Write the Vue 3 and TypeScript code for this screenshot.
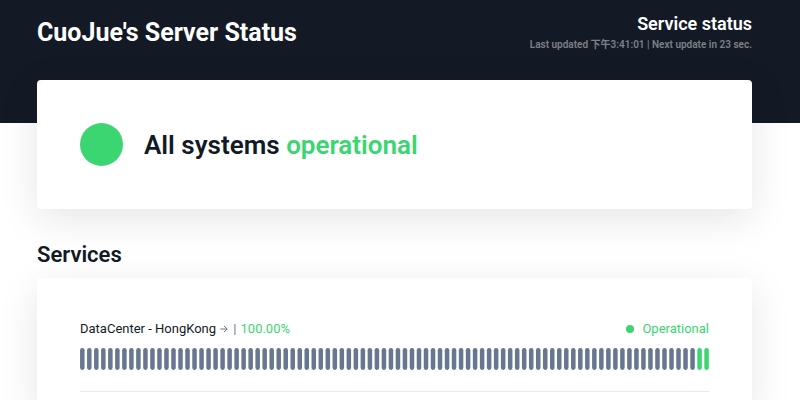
<script setup lang="ts">
interface Day {
  id: number
  status: 'unknown' | 'up'
}

const dayCount = 90
const monitoredDays = 2
const barPitch = 29.5

const days: Day[] = Array.from({ length: dayCount }, (_, id) => ({
  id,
  status: id >= dayCount - monitoredDays ? 'up' : 'unknown',
}))
</script>

<template>
  <div class="page">
    <header class="hero">
      <h1 class="site-title">CuoJue's Server Status</h1>
      <div class="update">
        <h2 class="update-title">Service status</h2>
        <p class="update-note">Last updated 下午3:41:01 | Next update in 23 sec.</p>
      </div>
    </header>
    <main class="content">
      <section class="card overall">
        <span class="pulse"></span>
        <h2 class="overall-title">All systems <span class="ok">operational</span></h2>
      </section>
      <h2 class="section-title">Services</h2>
      <section class="card services">
        <article class="service">
          <div class="service-head">
            <div class="service-name">
              <a class="service-link" href="#">
                DataCenter - HongKong
                <svg class="arrow" viewBox="0 0 8 8" aria-hidden="true">
                  <path d="M0.3 4H7.2M4 0.9L7.2 4L4 7.1" />
                </svg>
              </a>
              <span class="divider">|</span>
              <span class="ok">100.00%</span>
            </div>
            <div class="state ok"><span class="dot"></span>Operational</div>
          </div>
          <svg class="history" viewBox="0 0 2645 92" aria-hidden="true">
            <rect
              v-for="day in days"
              :key="day.id"
              :class="day.status"
              :x="day.id * barPitch"
              y="0"
              width="19"
              height="92"
              rx="9"
            />
          </svg>
        </article>
      </section>
    </main>
  </div>
</template>

<style>
body {
  background: #fff;
}
</style>

<style scoped>
.page {
  min-height: 100vh;
  box-sizing: border-box;
  overflow: hidden;
  font-family: Roboto, "Noto Sans CJK SC", sans-serif;
  color: #131a26;
}

h1,
h2,
p {
  margin: 0;
}

.hero {
  display: flex;
  justify-content: space-between;
  align-items: flex-start;
  padding: 12px 48px 70px 37px;
  background: #131a26;
  color: #fff;
}

.site-title {
  padding-top: 5px;
  font-size: 25px;
  line-height: 32px;
  font-weight: 700;
}

.update {
  text-align: right;
}

.update-title {
  font-size: 18px;
  line-height: 24px;
  font-weight: 600;
}

.update-note {
  font-size: 10px;
  line-height: 17px;
  font-weight: 600;
  color: #7d8086;
}

.content {
  margin-top: -43px;
  padding: 0 48px 0 37px;
}

.card {
  position: relative;
  background: #fff;
  border-radius: 4px;
  box-shadow: 0 10px 40px rgba(0, 0, 0, 0.1);
}

.overall {
  display: flex;
  align-items: center;
  gap: 21px;
  padding: 43px;
}

.pulse {
  width: 43px;
  height: 43px;
  border-radius: 50%;
  background: #3bd671;
}

.overall-title {
  font-size: 26px;
  line-height: 32px;
  font-weight: 600;
}

.ok {
  color: #3bd671;
}

.section-title {
  position: relative;
  padding: 31px 0 8px;
  font-size: 22px;
  line-height: 30px;
  font-weight: 600;
}

.services {
  padding: 41px 43px 20px;
}

.service {
  padding-bottom: 21px;
  border-bottom: 1px solid #e8e9ea;
}

.service-head {
  display: flex;
  justify-content: space-between;
  margin-bottom: 9px;
  font-size: 13px;
  line-height: 20px;
}

.service-name {
  display: flex;
  gap: 4px;
}

.service-link {
  color: #131a26;
  text-decoration: none;
}

.arrow {
  width: 8px;
  height: 8px;
  margin: 0 1px;
  fill: none;
  stroke: #687790;
  stroke-width: 1;
}

.divider {
  color: #687790;
}

.state {
  display: flex;
  align-items: center;
  gap: 8px;
}

.dot {
  width: 8px;
  height: 8px;
  border-radius: 50%;
  background: #3bd671;
}

.history {
  display: block;
  width: 100%;
}

.unknown {
  fill: #687790;
}

.up {
  fill: #3bd671;
}
</style>
